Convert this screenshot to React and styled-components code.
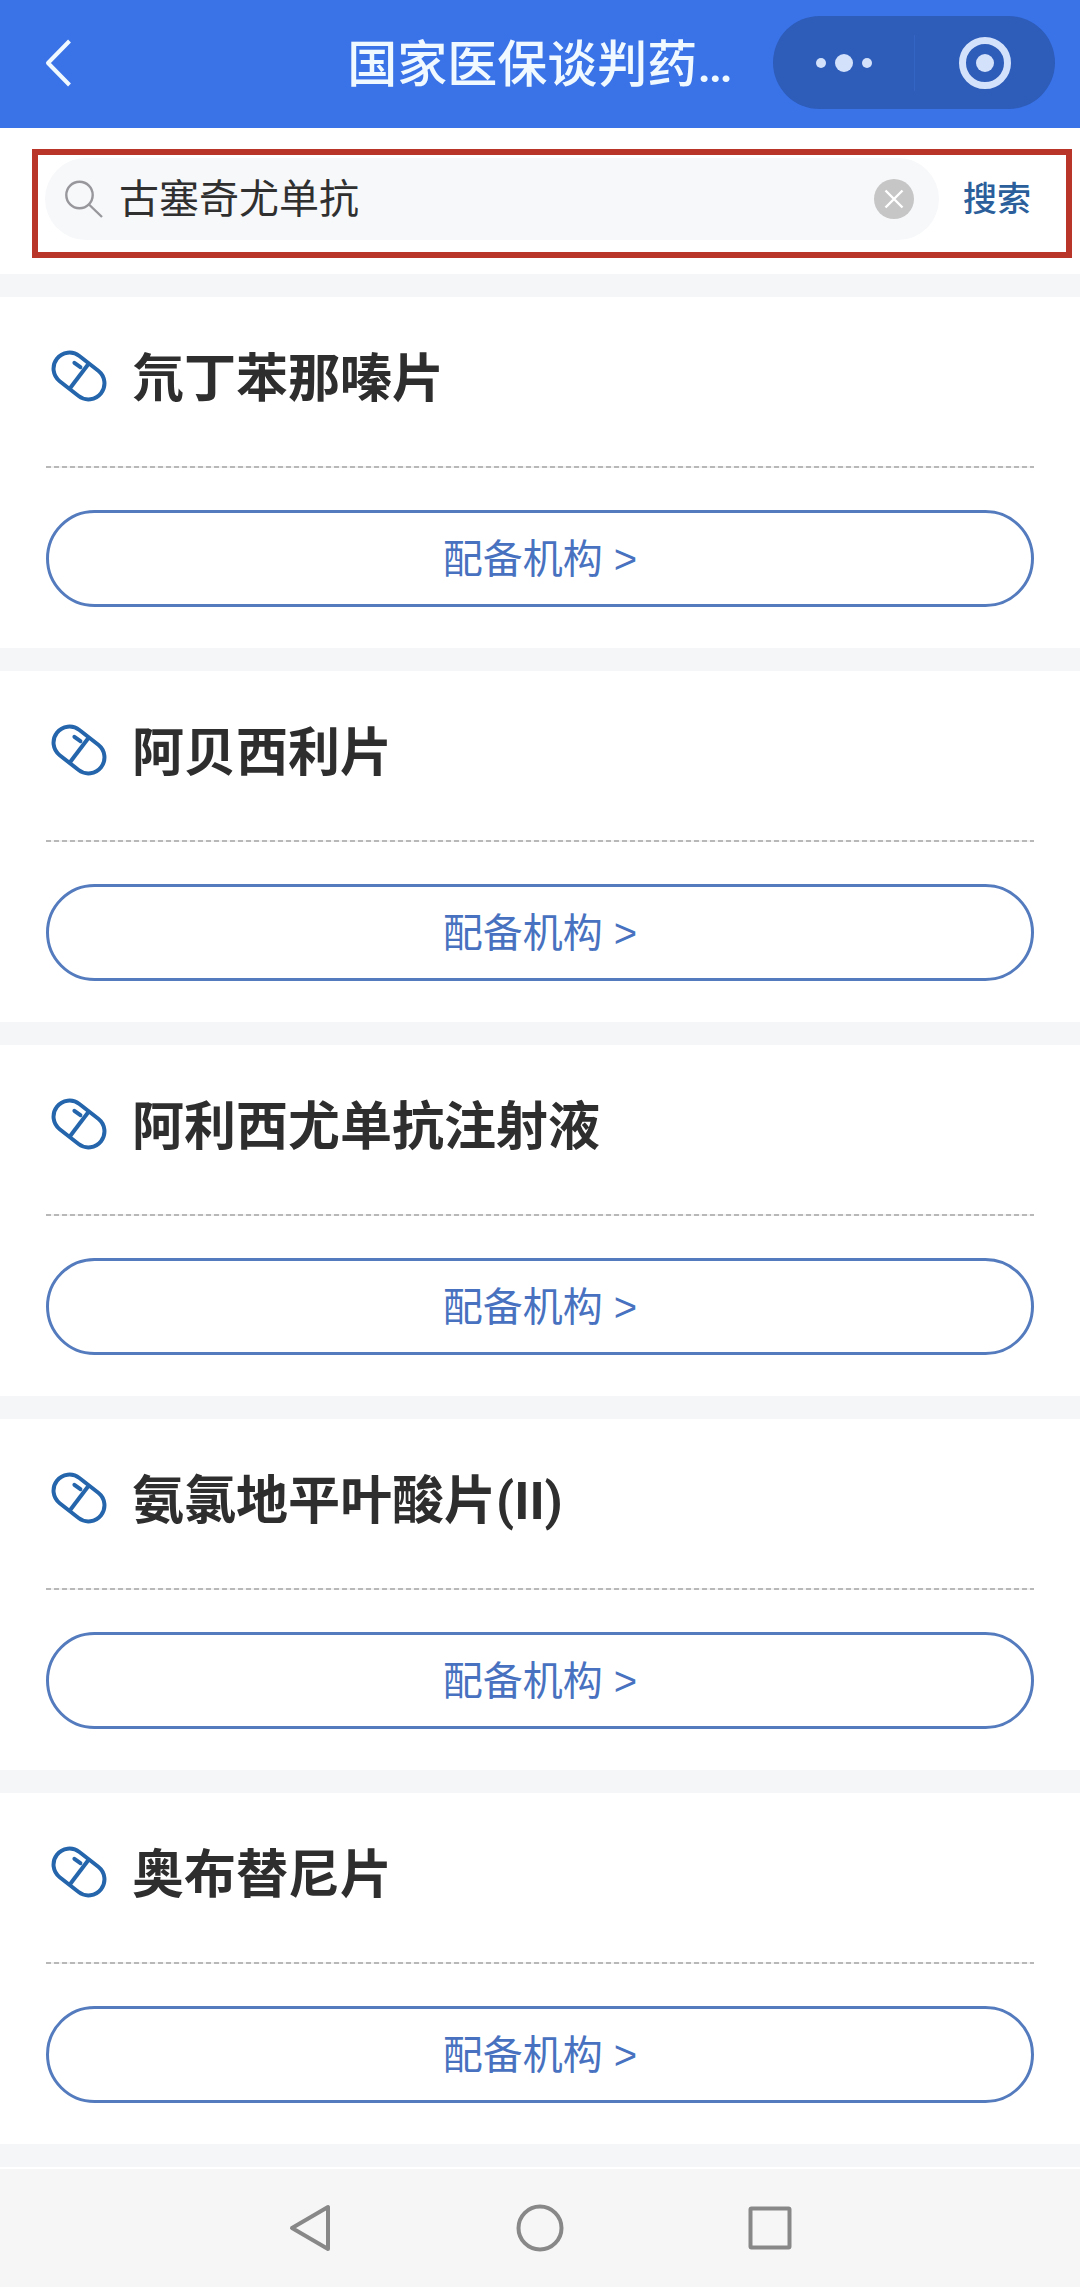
import React, { useState } from 'react';
import styled, { createGlobalStyle } from 'styled-components';

const drugs = [
  '氘丁苯那嗪片',
  '阿贝西利片',
  '阿利西尤单抗注射液',
  '氨氯地平叶酸片(II)',
  '奥布替尼片',
];

const GlobalStyle = createGlobalStyle`
  * {
    box-sizing: border-box;
  }
  body {
    margin: 0;
    background: #f5f6f8;
    font-family: Roboto, "Noto Sans CJK SC", sans-serif;
  }
  button, input {
    font-family: inherit;
    border: none;
    padding: 0;
    background: none;
  }
  svg {
    display: block;
  }
`;

const Page = styled.div`
  display: flex;
  flex-direction: column;
  min-height: 100vh;
`;

const Header = styled.header`
  display: grid;
  grid-template-columns: 1fr auto 1fr;
  align-items: center;
  height: 128px;
  padding: 0 25px 3px;
  background: #3a73e8;
`;

const BackButton = styled.button`
  justify-self: start;
  padding: 0 19px;
`;

const Title = styled.h1`
  margin: 0;
  padding-top: 4px;
  color: #f0f9ff;
  font-size: 50px;
  font-weight: 500;
  line-height: 60px;
  white-space: nowrap;
`;

const Capsule = styled.div`
  justify-self: end;
  display: flex;
  align-items: center;
  height: 93px;
  border-radius: 47px;
  background: #2d5cb9;
`;

const CapsuleButton = styled.button`
  display: flex;
  align-items: center;
  justify-content: center;
  width: 141px;
  height: 56px;

  & + & {
    border-left: 1px solid #3565c4;
  }
`;

const SearchArea = styled.section`
  padding: 21px 8px 16px 32px;
  background: #fff;
`;

const SearchForm = styled.form`
  display: flex;
  align-items: center;
  padding: 3px 35px 12px 7px;
  border: 6px solid #b93529;
`;

const SearchBox = styled.div`
  flex: 1;
  display: flex;
  align-items: center;
  gap: 16px;
  height: 82px;
  padding: 0 25px 0 20px;
  border-radius: 41px;
  background: #f7f8fa;
`;

const SearchInput = styled.input`
  flex: 1;
  min-width: 0;
  height: 64px;
  padding-bottom: 6px;
  color: #303030;
  font-size: 40px;
  outline: none;
`;

const SearchButton = styled.button`
  margin-left: 24px;
  color: #2b5f9b;
  font-size: 34px;
  font-weight: 500;
  line-height: 50px;
`;

const List = styled.main`
  display: flex;
  flex-direction: column;
  gap: 23px;
  padding: 23px 0;
`;

const Card = styled.article`
  padding: 53px 46px 41px;
  background: #fff;
`;

const CardHead = styled.div`
  display: flex;
  align-items: flex-start;
  gap: 25px;
  padding-left: 5px;
`;

const DrugName = styled.h2`
  margin: 0;
  color: #2e2e2e;
  font-size: 52px;
  font-weight: 700;
  line-height: 60px;
`;

const Divider = styled.hr`
  height: 2px;
  margin: 56px 0 42px;
  border: none;
  background: repeating-linear-gradient(90deg, #b8b8b8 0 5px, #f2f2f2 5px 8px);
`;

const OrgButton = styled.button`
  display: block;
  width: 100%;
  height: 97px;
  border: 3px solid #547bbd;
  border-radius: 49px;
  color: #4872bf;
  font-family: "Liberation Sans", "Noto Sans CJK SC", sans-serif;
  font-size: 40px;
  line-height: 60px;
`;

const NavBar = styled.nav`
  flex: 1;
  display: flex;
  align-items: center;
  justify-content: center;
  gap: 182px;
  min-height: 118px;
  border-top: 2px solid #fff;
  background: #f6f6f6;
`;

const NavButton = styled.button`
  width: 48px;
  height: 48px;
`;

function PillIcon() {
  return (
    <svg width="56" height="52" viewBox="0 0 56 52" fill="none" stroke="#2465ab" strokeWidth="4">
      <rect x="0" y="10" width="56" height="32" rx="16" transform="rotate(38 28 26)" />
      <path d="M37.8 13.5 18.8 38.5" />
      <path d="M23.4 12.8 29.4 17.2" strokeLinecap="round" />
    </svg>
  );
}

function SearchIcon() {
  return (
    <svg width="38" height="38" viewBox="0 0 38 38" fill="none" stroke="#98989c" strokeWidth="2.4">
      <circle cx="14.5" cy="15" r="13.2" />
      <path d="M24 24.5 37 37" />
    </svg>
  );
}

function NavIcon({ children }) {
  return (
    <svg width="48" height="48" viewBox="0 0 48 48" fill="none" stroke="#888" strokeWidth="4" strokeLinejoin="round">
      {children}
    </svg>
  );
}

function App() {
  const [keyword, setKeyword] = useState('古塞奇尤单抗');

  return (
    <Page lang="zh-CN">
      <GlobalStyle />
      <Header>
        <BackButton type="button" aria-label="返回">
          <svg width="30" height="50" viewBox="0 0 30 50" fill="none" stroke="#f0f9ff" strokeWidth="4" strokeLinejoin="round">
            <path d="M25.5 3 4 25 25.5 47" />
          </svg>
        </BackButton>
        <Title>国家医保谈判药…</Title>
        <Capsule>
          <CapsuleButton type="button" aria-label="更多">
            <svg width="56" height="20" viewBox="0 0 56 20" fill="#d3e1fb">
              <circle cx="5" cy="10" r="5" />
              <circle cx="28" cy="10" r="9" />
              <circle cx="51" cy="10" r="5" />
            </svg>
          </CapsuleButton>
          <CapsuleButton type="button" aria-label="关闭">
            <svg width="52" height="52" viewBox="0 0 52 52">
              <circle cx="26" cy="26" r="22.5" fill="none" stroke="#d3e1fb" strokeWidth="7" />
              <circle cx="26" cy="26" r="9" fill="#d3e1fb" />
            </svg>
          </CapsuleButton>
        </Capsule>
      </Header>

      <SearchArea>
        <SearchForm onSubmit={(e) => e.preventDefault()}>
          <SearchBox>
            <SearchIcon />
            <SearchInput
              type="text"
              aria-label="药品名称"
              value={keyword}
              onChange={(e) => setKeyword(e.target.value)}
            />
            <button type="button" aria-label="清空" onClick={() => setKeyword('')}>
              <svg width="40" height="40" viewBox="0 0 40 40">
                <circle cx="20" cy="20" r="20" fill="#c6c6c6" />
                <path d="M11.5 11.5 28.5 28.5M28.5 11.5 11.5 28.5" stroke="#fff" strokeWidth="2.4" />
              </svg>
            </button>
          </SearchBox>
          <SearchButton type="submit">搜索</SearchButton>
        </SearchForm>
      </SearchArea>

      <List>
        {drugs.map((name) => (
          <Card key={name}>
            <CardHead>
              <PillIcon />
              <DrugName>{name}</DrugName>
            </CardHead>
            <Divider />
            <OrgButton type="button">配备机构 &gt;</OrgButton>
          </Card>
        ))}
      </List>

      <NavBar>
        <NavButton type="button" aria-label="后退">
          <NavIcon>
            <path d="M42 3v42L6 24z" />
          </NavIcon>
        </NavButton>
        <NavButton type="button" aria-label="主页">
          <NavIcon>
            <circle cx="24" cy="24" r="21.5" />
          </NavIcon>
        </NavButton>
        <NavButton type="button" aria-label="最近任务">
          <NavIcon>
            <rect x="4.5" y="4.5" width="39" height="39" rx="1" />
          </NavIcon>
        </NavButton>
      </NavBar>
    </Page>
  );
}

export default App;
